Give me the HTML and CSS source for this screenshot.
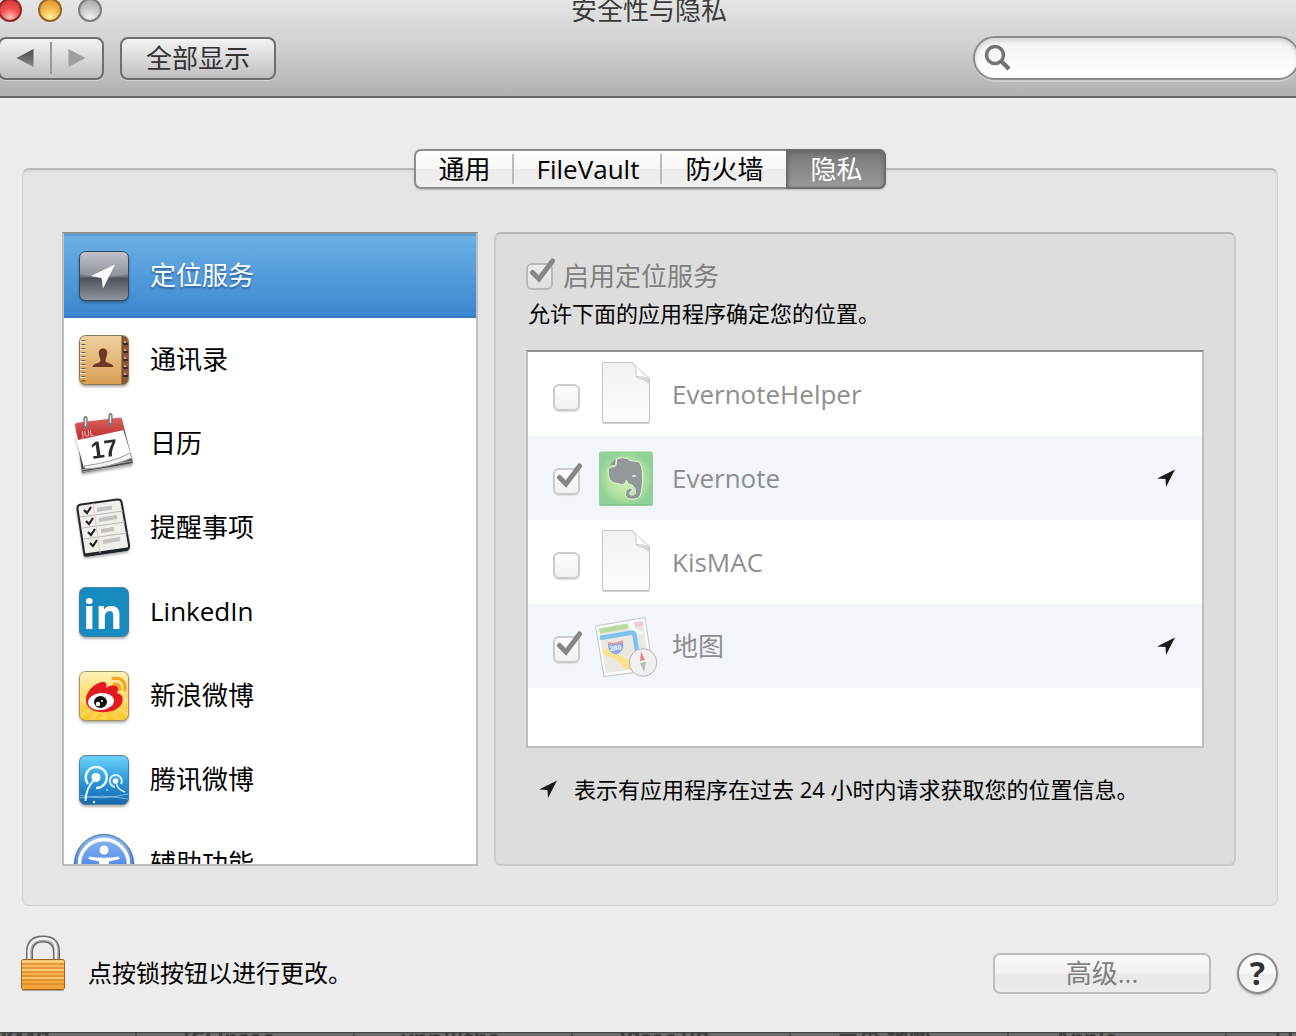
FILE: index.html
```html
<!DOCTYPE html>
<html lang="zh-CN">
<head>
<meta charset="utf-8">
<meta name="viewport" content="width=device-width, initial-scale=1">
<title>安全性与隐私</title>
<link rel="stylesheet" href="styles.css">
</head>
<body>
<svg class="defs" width="0" height="0" aria-hidden="true">
  <defs>
    <linearGradient id="g-steel" x1="0" y1="0" x2="0" y2="1"><stop offset="0" stop-color="#b9bbc1"/><stop offset=".48" stop-color="#83868f"/><stop offset=".55" stop-color="#4f535d"/><stop offset="1" stop-color="#92959d"/></linearGradient>
    <linearGradient id="g-tan" x1="0" y1="0" x2="0" y2="1"><stop offset="0" stop-color="#f0d2a0"/><stop offset="1" stop-color="#d99f54"/></linearGradient>
    <linearGradient id="g-red" x1="0" y1="0" x2="0" y2="1"><stop offset="0" stop-color="#dc6361"/><stop offset="1" stop-color="#bd2b2d"/></linearGradient>
    <linearGradient id="g-yellow" x1="0" y1="0" x2="0" y2="1"><stop offset="0" stop-color="#fff2b8"/><stop offset="1" stop-color="#fcc623"/></linearGradient>
    <linearGradient id="g-sky" x1="0" y1="0" x2="0" y2="1"><stop offset="0" stop-color="#6dd3fa"/><stop offset=".5" stop-color="#2f9bd8"/><stop offset="1" stop-color="#1465ad"/></linearGradient>
    <linearGradient id="g-access" x1="0" y1="0" x2="0" y2="1"><stop offset="0" stop-color="#8ebcf3"/><stop offset="1" stop-color="#1f5fe0"/></linearGradient>
    <linearGradient id="g-doc" x1="0" y1="0" x2="0" y2="1"><stop offset="0" stop-color="#f1f1f1"/><stop offset="1" stop-color="#fdfdfd"/></linearGradient>
    <radialGradient id="g-green"><stop offset="0" stop-color="#d4f3b8"/><stop offset=".65" stop-color="#b5e3a0"/><stop offset="1" stop-color="#8fd197"/></radialGradient>
    <linearGradient id="g-gold" x1="0" y1="0" x2="0" y2="1"><stop offset="0" stop-color="#fbc26a"/><stop offset="1" stop-color="#f2a12f"/></linearGradient>
    <linearGradient id="g-arrow" x1="0" y1="0" x2="0" y2="1"><stop offset="0" stop-color="#4a4a4a"/><stop offset="1" stop-color="#8a8a8a"/></linearGradient>
    <symbol id="near" viewBox="0 0 18 18"><path d="M0 9.500 18 .5 9 18 8.500 10Z" fill="#1a1a1a"/></symbol>
    <symbol id="doc" viewBox="0 0 64 64">
      <path d="M8.500 .5H38L55.500 17V60.500H8.500Z" fill="url(#g-doc)" stroke="#c4c4c4"/>
      <path d="M9 61H55" stroke="#aaa"/>
      <path d="M42 15 55 17V22Q50 17 42 16Z" fill="#d2d2d2"/>
      <path d="M38 .5 55.500 16.500Q50 14.500 42 14.500V7Q41 3 38 .5Z" fill="#fdfdfd" stroke="#cfcfcf"/>
    </symbol>
  </defs>
</svg>

<div class="window">
  <header class="chrome">
    <div class="titlebar">
      <div class="lights">
        <button class="light light-close" aria-label="关闭"></button>
        <button class="light light-min" aria-label="最小化"></button>
        <button class="light light-zoom" aria-label="缩放"></button>
      </div>
      <h1 class="title">安全性与隐私</h1>
    </div>
    <div class="toolbar">
      <div class="history">
        <button class="history-btn" aria-label="后退"><svg width="18" height="18"><path d="M17.500 0V18L.5 9Z" fill="url(#g-arrow)"/></svg></button>
        <button class="history-btn" aria-label="前进"><svg width="18" height="18"><path d="M.5 0V18L17.500 9Z" fill="#a0a0a0"/></svg></button>
      </div>
      <button class="show-all">全部显示</button>
      <label class="search">
        <svg width="28" height="28" fill="none" stroke="#737373"><circle cx="11" cy="11" r="8.500" stroke-width="3.500"/><path d="M17 17 25 25" stroke-width="4.500"/></svg>
        <input class="search-input" type="search" aria-label="搜索">
      </label>
    </div>
  </header>

  <main class="content">
    <div class="tabs" role="tablist">
      <button class="tab" role="tab">通用</button>
      <button class="tab" role="tab">FileVault</button>
      <button class="tab" role="tab">防火墙</button>
      <button class="tab tab-active" role="tab" aria-selected="true">隐私</button>
    </div>
    <section class="group">
      <ul class="services">
        <li class="service service-active">
          <svg class="icon" viewBox="0 0 64 64"><rect x="7.500" y="7.500" width="49" height="49" rx="6" fill="url(#g-steel)" stroke="#344760"/><path d="M8 30Q32 37 56 30V14Q56 8 50 8H14Q8 8 8 14Z" fill="#fff" opacity=".12"/><path d="M19 32 43 20.500 31 44.500 29.500 34Z" fill="#fff"/></svg>
          <span>定位服务</span>
        </li>
        <li class="service">
          <svg class="icon" viewBox="0 0 64 64"><rect x="7.500" y="7.500" width="49" height="49" rx="6" fill="url(#g-tan)" stroke="#8d7456"/><path d="M50 8H51Q56 8 56 14V50Q56 56 51 56H50Z" fill="#8b583c"/><path d="M50 8V56" stroke="#6b432d"/><path d="M51 16H56M51 24H56M51 32H56M51 40H56M51 48H56" stroke="#47291c" stroke-width="2"/><path d="M52 14H54M52 22H54M52 30H54M52 38H54M52 46H54" stroke="#c6a184" stroke-width="2"/><path d="M11.500 12V54" stroke="#83592d" stroke-width="4" stroke-dasharray="1.500 2.500"/><path d="M8 13.500H14M8 17.500H14M8 21.500H14M8 25.500H14M8 29.500H14M8 33.500H14M8 37.500H14M8 41.500H14M8 45.500H14M8 49.500H14" stroke="#e8e4dc"/><path d="M20.500 39C21 35 28 35.500 28.500 33 28.800 31 27 29 26.800 25.500 26.500 22 28.500 20.500 31 20.500S35.500 22 35.200 25.500C35 29 33.200 31 33.500 33 34 35.500 41 35 41.500 39Z" fill="#6f3724"/></svg>
          <span>通讯录</span>
        </li>
        <li class="service">
          <svg class="icon" viewBox="0 0 64 64"><path d="M4 14 50 8 61 51 10 61Z" fill="#4a4b4d"/><path d="M9 58 60 49M10 60 60 52" stroke="#aaa"/><path d="M3 24 51 17 60 46 44 51 12 56Z" fill="#fff"/><path d="M3 12.500Q3 11 5 10.700L48 5.500Q50 5.500 50 7L52 18 6 28Z" fill="url(#g-red)"/><path d="M12 54Q42 50 58 41L60 46Q36 56 13 57Z" fill="#f5f5f5" stroke="#999"/><path d="M13.500 6V15M38.500 3V12" stroke="#777" stroke-width="4" stroke-linecap="round"/><path d="M13.500 6V14M38.500 3V11" stroke="#e2e2e2" stroke-width="1.500"/><text class="cal-month" transform="rotate(-7 10 25)" x="10" y="25">JUL</text><text class="cal-day" transform="rotate(-8 20 47)" x="20" y="47">17</text></svg>
          <span>日历</span>
        </li>
        <li class="service">
          <svg class="icon" viewBox="0 0 64 64"><path d="M9 8.500 45 3.500Q49 3 49.500 6L57 49Q57.500 53 54 54L16 59.500Q12.500 60 12 56L5.500 13Q5 9 9 8.500Z" fill="#eeeeea" stroke="#22262b" stroke-width="2"/><path d="M13 59 55 53" stroke="#20242a" stroke-width="3" stroke-linecap="round"/><path d="M8 21 51 15M10 32 53 26M12 43 55 37" stroke="#b9b9b6"/><path d="M21 7 28 57" stroke="#f0c3c0"/><g stroke="#c1c1be" stroke-width="4"><path d="M25 14 40 11.500M27 24 45 21M29 35 42 33M31 46 48 43"/></g><g fill="none" stroke="#222" stroke-width="2.200"><path d="M12 14 15 17 19 11M14 25 17 28 21 22M16 36 19 39 23 33M18 47 21 50 25 44"/></g></svg>
          <span>提醒事项</span>
        </li>
        <li class="service">
          <svg class="icon" viewBox="0 0 64 64"><rect x="7.500" y="7.500" width="49" height="49" rx="6" fill="#178bbf" stroke="#4d7f98"/><text class="in-mark" x="11" y="49">in</text></svg>
          <span>LinkedIn</span>
        </li>
        <li class="service">
          <svg class="icon" viewBox="0 0 64 64"><rect x="7.500" y="7.500" width="49" height="49" rx="6" fill="url(#g-yellow)" stroke="#a8905a"/><path d="M32 38 8 50V54ZM32 38 17 56H22ZM32 38 30 56H35ZM32 38 44 56H49ZM32 38 56 48V52ZM32 38 56 34V38ZM32 38 8 34V39Z" fill="#fff" opacity=".2"/><path d="M14 37C13 27 25 17 32 18 35 18.500 35 21 34 24 38 21 45 20 46 24 46.500 26 46 27 45 29 50 30 52 34 50 39 47 46 37 49 29 48 21 47.500 14.500 44 14 37Z" fill="#e21a22"/><ellipse cx="29" cy="37.500" rx="13" ry="8.500" transform="rotate(-6 29 37.500)" fill="#fff"/><ellipse cx="28.500" cy="38" rx="6.500" ry="6" fill="#111"/><circle cx="26" cy="40" r="2.200" fill="#fff"/><circle cx="30" cy="37" r="1" fill="#fff"/><path d="M41 14.500Q54 13 53 26M42 20Q48.500 19.500 48 25.500" fill="none" stroke="#f9a01f" stroke-width="3" stroke-linecap="round"/></svg>
          <span>新浪微博</span>
        </li>
        <li class="service">
          <svg class="icon" viewBox="0 0 64 64"><rect x="7.500" y="7.500" width="49" height="49" rx="6" fill="url(#g-sky)" stroke="#567f99"/><path d="M8 47Q26 53 56 46M8 50Q30 46 56 51" fill="none" stroke="#9bd5f0" opacity=".7"/><circle cx="24" cy="29.500" r="4.500" fill="#fff"/><path d="M16 36A10.500 10.500 0 1 1 24 40" fill="none" stroke="#e8f7ff" stroke-width="2.500"/><path d="M22 32Q14 40 13.500 53" fill="none" stroke="#e8f7ff" stroke-width="2"/><circle cx="43.500" cy="33" r="2.800" fill="#fff"/><path d="M43 39A6 6 0 1 1 49 36" fill="none" stroke="#d5effc" stroke-width="2"/><path d="M44 35Q46 42 53 44" fill="none" stroke="#d5effc" stroke-width="1.500"/><circle cx="22" cy="54" r="1.200" fill="#fff"/><circle cx="35" cy="42" r="1" fill="#9bdcfa"/></svg>
          <span>腾讯微博</span>
        </li>
        <li class="service">
          <svg class="icon" viewBox="0 0 64 64"><circle cx="32" cy="32" r="29.500" fill="url(#g-access)" stroke="#3b6391"/><circle cx="32" cy="32" r="24.500" fill="none" stroke="#fff" stroke-width="3.500"/><circle cx="32" cy="18" r="4.500" fill="#fff"/><path d="M17 24.500Q32 27 47 24.500L47.500 27 37 29.500V35L41 49 38 50 32 37 26 50 23 49 27 35V29.500L16.500 27Z" fill="#fff"/></svg>
          <span>辅助功能</span>
        </li>
      </ul>

      <div class="detail">
        <label class="enable"><input class="check" type="checkbox" checked disabled><span>启用定位服务</span></label>
        <p class="hint">允许下面的应用程序确定您的位置。</p>
        <ul class="apps">
          <li class="app">
            <label class="app-label"><input class="check" type="checkbox" disabled>
            <svg class="icon" viewBox="0 0 64 64"><use href="#doc"/></svg><span>EvernoteHelper</span></label>
          </li>
          <li class="app">
            <label class="app-label"><input class="check" type="checkbox" checked disabled>
            <svg class="icon" viewBox="0 0 64 64"><rect x="5" y="5.500" width="54" height="54" rx="2.500" fill="url(#g-green)"/><path d="M5.500 59H58.500" stroke="#78b583"/><path d="M14 24Q14 21 21 20.500 22.500 20 22.500 13 27 11 31 12 34 12 36 14.500L44 15.500Q48 17 48.500 28 49 43 46 50 43 54 36 53 31 52 31.500 47 32 42 38 42V45.500Q35 45 36 48.500 40 50 41.500 47 42 42 38 39 33 38 32.500 34 31 40 25 38 18 37 16 34 14 30 14 24Z" fill="#92989a" stroke="#e6f8d8"/><path d="M15.500 19 21 13V19Z" fill="#92989a"/><path d="M38 31Q39 27 43 30.500Z" fill="#d9f2c6"/></svg><span>Evernote</span></label>
            <svg class="near" role="img" aria-label="最近使用过位置"><use href="#near"/></svg>
          </li>
          <li class="app">
            <label class="app-label"><input class="check" type="checkbox" disabled>
            <svg class="icon" viewBox="0 0 64 64"><use href="#doc"/></svg><span>KisMAC</span></label>
          </li>
          <li class="app">
            <label class="app-label"><input class="check" type="checkbox" checked disabled>
            <svg class="icon" viewBox="0 0 64 64"><path d="M1.500 12 51 3.500 59 56 10 62.500Z" fill="#fbfbfb" stroke="#c2c4c6"/><path d="M5 14.500 48.500 7 55.500 53 12 59Z" fill="#ebe8e1"/><path d="M5 14.500 34 9.500 35 14.500 6 19.500Z" fill="#b8dba0"/><path d="M40 8.500 48.500 7 49.500 12 41 13.500Z" fill="#efcdd5"/><path d="M34 9.500 40 8.500 41 15 50 19 46 20 35 15Z" fill="#fff"/><path d="M9 35Q18 34 24 40L41 50 40 55 33 56 20 44 10 41Z" fill="#f8e28b"/><path d="M6 24 38 18.500Q40 18.500 40.500 21L43 37" fill="none" stroke="#7cc2ed" stroke-width="4.500"/><path d="M14 29Q21 30 29 27 31 38 22 40.500 13 39 14 29Z" fill="#85ade6"/><path d="M14 31V28Q21 30 29 26V29Z" fill="#e99a9a"/><text class="road" transform="rotate(-7 16 37)" x="16" y="37">280</text><circle cx="49" cy="48.500" r="13.800" fill="#f0f0f1" stroke="#b4b5b7"/><path d="M46 47 47 37 51 46Z" fill="#e88988"/><path d="M46 49 52 48 50 58Z" fill="#b9babb"/></svg><span>地图</span></label>
            <svg class="near" role="img" aria-label="最近使用过位置"><use href="#near"/></svg>
          </li>
        </ul>
        <p class="legend"><svg class="near" aria-hidden="true"><use href="#near"/></svg><span>表示有应用程序在过去 24 小时内请求获取您的位置信息。</span></p>
      </div>
    </section>
  </main>

  <footer class="footer">
    <button class="lock" aria-label="锁"><svg width="46" height="58" viewBox="0 0 46 58">
      <path d="M9.500 25V18Q9.500 5 23 5T36.500 18V25" fill="none" stroke="#666" stroke-width="7"/>
      <path d="M9.500 25V18Q9.500 5 23 5T36.500 18V25" fill="none" stroke="#aaa" stroke-width="4.500"/>
      <path d="M9 25V18Q9 5 23 4.500T36 18V25" fill="none" stroke="#f4f4f4" stroke-width="2.500"/>
      <rect x="1.500" y="25.500" width="43" height="30" rx="2" fill="url(#g-gold)" stroke="#9a6425"/>
      <path d="M2 30H44M2 34H44M2 38H44M2 42H44M2 46H44M2 50H44" stroke="#cd7a20"/><path d="M2 27.500H44M2 36H44M2 44H44" stroke="#fddb8e"/>
      <path d="M2 56.500H44" stroke="#6d5335" opacity=".5"/></svg></button>
    <span class="lock-text">点按锁按钮以进行更改。</span>
    <button class="advanced" disabled>高级...</button>
    <button class="help" aria-label="帮助">?</button>
  </footer>
</div>

<div class="backdrop" aria-hidden="true">
  <span>KMB …</span><span>(CLIpsec…</span><span>vpn川ths</span><span>IPsec VP</span><span>苹果 地图</span><span>Apple –</span><span>日</span>
</div>
</body>
</html>
```
FILE: styles.css
```css
* { box-sizing: border-box; }

body {
  margin: 0;
  height: 100vh;
  min-height: 900px;
  display: flex;
  flex-direction: column;
  overflow: hidden;
  background: #ececec;
  color: #000;
  font-family: "Open Sans", "Noto Sans CJK SC", sans-serif;
  font-size: 26px;
  line-height: 32px;
}

button, input { font: inherit; color: inherit; }
button { padding: 0; }
h1, p, ul { margin: 0; padding: 0; }
ul { list-style: none; }
svg { display: block; flex: none; overflow: visible; }
.defs { position: absolute; }

.window { flex: 1; min-height: 0; display: flex; flex-direction: column; }

/* Title bar and toolbar */
.chrome {
  background: linear-gradient(#e5e5e5, #cfcfcf 50%, #b0b0b0);
  border-bottom: 2px solid #666;
  overflow: hidden;
}
.titlebar {
  height: 20px;
  margin: 0 -4px 0 -2px;
  display: grid;
  grid-template-columns: 1fr auto 1fr;
  grid-template-rows: 20px;
  align-items: center;
}
.lights { display: flex; gap: 16px; }
.light {
  width: 24px;
  height: 24px;
  border: 2px solid;
  border-radius: 50%;
}
.light-close { border-color: #8e2a26; background: radial-gradient(circle at 50% 90%, #ffc4bd, #f25450 45%, #cf2f2f); }
.light-min { border-color: #9a6423; background: radial-gradient(circle at 50% 90%, #fff3a4, #f6bd51 45%, #d98a28); }
.light-zoom { border-color: #7c7c7c; background: radial-gradient(circle at 50% 90%, #f4f4f4, #cbcbcb 45%, #a2a2a2); }
.title { font-size: 26px; font-weight: 400; color: #3b3b3b; }

.toolbar {
  display: flex;
  align-items: center;
  padding: 16px 0;
}
.history, .show-all {
  height: 43px;
  border: 2px solid #6e6e6e;
  border-radius: 8px;
  background: linear-gradient(#f3f3f3, #bfbfbf);
  box-shadow: 0 1px 0 #d4d4d4;
}
.history { display: flex; align-items: center; width: 106px; margin-left: -2px; }
.history-btn {
  flex: 1;
  height: 32px;
  display: grid;
  place-items: center;
  border: 0;
  background: none;
}
.history-btn + .history-btn { border-left: 2px solid #999; }
.show-all { margin-left: 16px; padding: 0 24px; color: #333; }
.search {
  margin: 0 -4px 0 auto;
  width: 327px;
  height: 44px;
  display: flex;
  align-items: center;
  gap: 8px;
  padding: 0 9px;
  border: 2px solid #8b8b8b;
  border-radius: 22px;
  background: linear-gradient(#f3f3f3, #fff);
  box-shadow: inset 0 3px 4px #d5d5d5, 0 2px 0 #cfcfcf;
}
.search-input { flex: 1; min-width: 0; border: 0; outline: 0; background: none; }

/* Tabs over the group frame */
.content {
  flex: 1;
  min-height: 0;
  display: flex;
  flex-direction: column;
  padding: 51px 18px 0 22px;
}
.tabs {
  position: relative;
  align-self: center;
  display: flex;
  height: 40px;
  margin-bottom: -21px;
  border: 2px solid #8d8d8d;
  border-radius: 7px;
  background: linear-gradient(#fff, #f6f6f6 50%, #ebebeb 51%, #f0f0f0);
  box-shadow: 0 1px 2px #bbb;
}
.tab {
  padding: 0 23px;
  border: 0;
  background: linear-gradient(#bbb, #bbb) right center / 2px 30px no-repeat;
}
.tab:nth-child(3) { background: none; }
.tab-active {
  margin: -2px;
  margin-left: 0;
  padding: 0 22px;
  border: 2px solid #6c6c6c;
  border-radius: 0 7px 7px 0;
  background: linear-gradient(#787878, #999);
  box-shadow: inset 0 2px 4px #666;
  color: #fff;
}

.group {
  flex: 1;
  min-height: 0;
  display: grid;
  grid-template-columns: 416fr 742fr;
  grid-template-rows: minmax(0, 1fr);
  gap: 16px;
  padding: 62px 41px 39px 39px;
  border: 1px solid #d2d2d2;
  border-top: 2px solid #b9b9b9;
  border-radius: 7px;
  background: #e5e5e5;
  box-shadow: inset 0 2px 2px #dadada;
}

.services {
  overflow: hidden;
  border: 2px solid #bebebe;
  border-top-color: #8e8e8e;
  background: #fff;
}
.service {
  height: 84px;
  display: flex;
  align-items: center;
  gap: 14px;
  padding-left: 8px;
}
.service span { padding-bottom: 3px; }
.service-active {
  background: linear-gradient(#6cb1e6, #3a86d0);
  box-shadow: inset 0 2px 0 #5b9fd8, inset 0 -2px 0 #3579c2;
  color: #fff;
  text-shadow: 0 2px 2px #2c62a0;
}
.icon { width: 64px; height: 64px; }
.service .icon { filter: drop-shadow(0 2px 1px rgba(0, 0, 0, .3)); }
.cal-month { font: 8px "Noto Sans", sans-serif; fill: #f6d7d5; }
.cal-day { font: bold 24px "Liberation Sans", sans-serif; fill: #2c2c2c; }
.in-mark { font: bold 41px "Open Sans", sans-serif; fill: #fff; }
.road { font: bold 7px "Liberation Sans", sans-serif; fill: #fff; }

/* Detail pane */
.detail {
  display: flex;
  flex-direction: column;
  padding: 23px 30px 59px;
  border: 2px solid #cacaca;
  border-top-color: #b5b5b5;
  border-radius: 7px;
  background: #ddd;
}
.enable { display: flex; align-items: center; gap: 10px; height: 38px; color: #808080; }
.check {
  appearance: none;
  position: relative;
  flex: none;
  width: 27px;
  height: 27px;
  margin: 0;
  border: 2px solid #cbcbcb;
  border-radius: 6px;
  background: linear-gradient(#fdfdfd, #f0f0f0);
  box-shadow: 0 1px 1px #ddd;
}
.enable .check { border-color: #b9b9b9; background: linear-gradient(#eee, #e0e0e0); }
.check:checked::after {
  content: "";
  position: absolute;
  left: -1px;
  top: -7px;
  width: 30px;
  height: 30px;
  background: url("data:image/svg+xml,%3Csvg xmlns='http://www.w3.org/2000/svg' width='30' height='30'%3E%3Cpath d='M5.500 14.500 12 21 25.500 3' fill='none' stroke='%23868686' stroke-width='5' stroke-linecap='round'/%3E%3C/svg%3E") no-repeat;
}
.hint { font-size: 22px; margin: 2px 0 21px 2px; white-space: nowrap; }
.apps {
  flex: 1;
  overflow: hidden;
  border: 2px solid #bebebe;
  border-top-color: #8e8e8e;
  background: #fff;
}
.app { height: 84px; display: flex; align-items: center; padding: 0 27px 0 25px; color: #8e8e8e; }
.app:nth-child(even) { background: #f2f5fa; }
.app-label { flex: 1; display: flex; align-items: center; gap: 14px; }
.app .check { margin-top: 6px; }
.near { width: 18px; height: 18px; }
.legend {
  display: flex;
  align-items: center;
  gap: 17px;
  margin: 25px 0 0 13px;
  font-size: 22px;
  white-space: nowrap;
}

/* Footer */
.footer {
  height: 126px;
  display: flex;
  align-items: center;
  padding: 8px 18px 0 20px;
}
.lock { margin-bottom: 20px; border: 0; background: none; }
.lock-text { margin-left: 22px; font-size: 24px; }
.advanced {
  width: 218px;
  height: 41px;
  margin-left: auto;
  border: 2px solid #bdbdbd;
  border-radius: 7px;
  background: linear-gradient(#f8f8f8, #f0f0f0 50%, #e8e8e8 51%, #ececec);
  color: #808080;
}
.help {
  width: 41px;
  height: 41px;
  margin-left: 26px;
  border: 2px solid #8c8c8c;
  border-radius: 50%;
  background: linear-gradient(#fff, #f6f6f6 50%, #ececec 51%, #fafafa);
  box-shadow: 0 1px 2px #aaa;
  color: #333;
  font-size: 32px;
  font-weight: 700;
  line-height: 36px;
}

/* Strip of the window behind */
.backdrop {
  flex: none;
  height: 4px;
  display: flex;
  margin-left: -81px;
  overflow: hidden;
  border-top: 1px solid #444;
  background: #6a6a6a;
  color: #3f3f3f;
  font-size: 22px;
  font-weight: 700;
  line-height: 8px;
  white-space: nowrap;
}
.backdrop span {
  flex: 0 0 218px;
  height: 3px;
  padding-left: 46px;
  border-right: 2px solid #505050;
}
.backdrop span:first-child { padding-left: 81px; }
```
